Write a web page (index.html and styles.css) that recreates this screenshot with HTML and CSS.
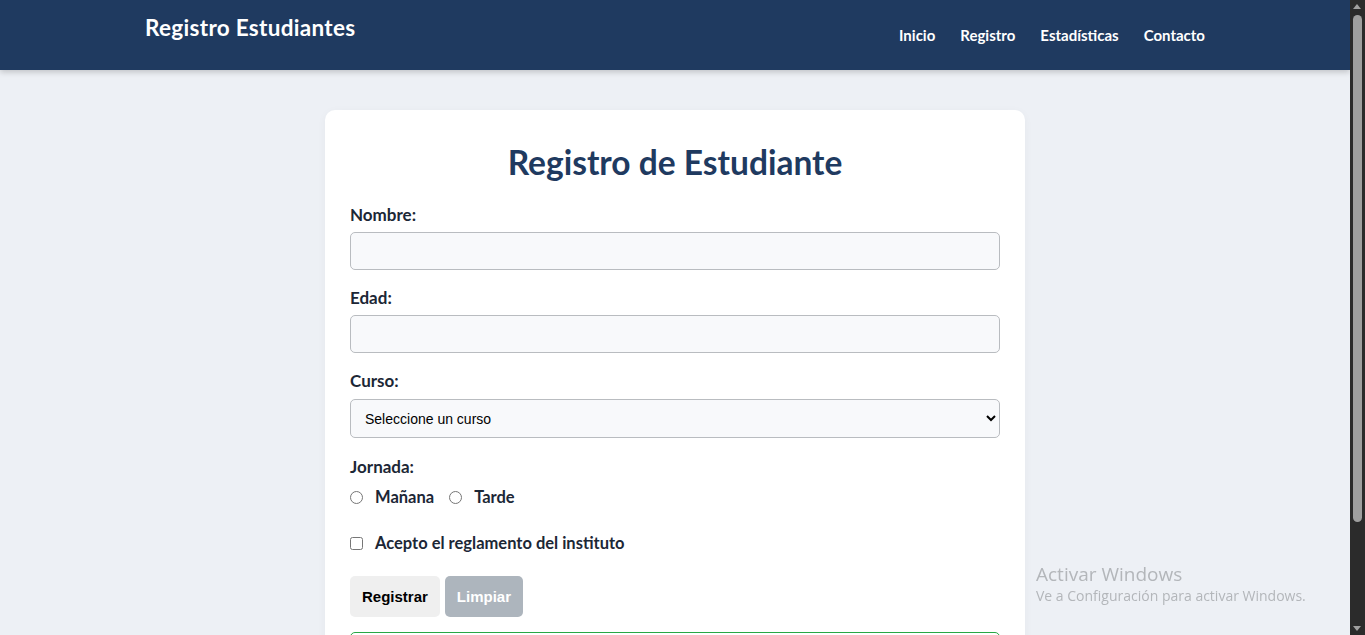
FILE: index.html
```html
<!DOCTYPE html>
<html lang="es">

<head>
    <meta charset="UTF-8">
    <meta name="viewport" content="width=device-width, initial-scale=1.0">
    <title>Registro Estudiantes</title>
    <link rel="stylesheet" href="styles.css">
</head>

<body>
    <header class="topbar">
        <div class="container topbar-inner">
            <h1 class="brand">Registro Estudiantes</h1>
            <nav class="menu">
                <a href="#">Inicio</a>
                <a href="#">Registro</a>
                <a href="#">Estadísticas</a>
                <a href="#">Contacto</a>
            </nav>
        </div>
    </header>

    <main class="main">
        <form class="card" name="f" onsubmit="return false">
            <h2 class="card-title">Registro de Estudiante</h2>

            <div class="form-group">
                <label for="txtNombre">Nombre:</label>
                <input type="text" id="txtNombre" class="field">
            </div>

            <div class="form-group">
                <label for="txtEdad">Edad:</label>
                <input type="number" id="txtEdad" class="field">
            </div>

            <div class="form-group group-select">
                <label for="selCurso">Curso:</label>
                <select id="selCurso" class="field select">
                    <option>Seleccione un curso</option>
                </select>
            </div>

            <div class="form-group">
                <label>Jornada:</label>
                <div class="options">
                    <label class="option"><input type="radio" name="jornada"> Mañana</label>
                    <label class="option"><input type="radio" name="jornada"> Tarde</label>
                </div>
            </div>

            <div class="form-group group-check">
                <label class="option check"><input type="checkbox"> Acepto el reglamento del instituto</label>
            </div>

            <div class="form-btn">
                <button type="submit" class="btn">Registrar</button>
                <button type="reset" class="btn btn-gray">Limpiar</button>
            </div>

            <!-- mensaje de resultado -->
            <div class="message" id="mensaje"></div>
        </form>
    </main>

    <div class="watermark">
        <p class="wm-title">Activar Windows</p>
        <p class="wm-sub">Ve a Configuración para activar Windows.</p>
    </div>

    <div class="scrollbar">
        <span class="arrow arrow-up"></span>
        <span class="thumb"></span>
        <span class="arrow arrow-down"></span>
    </div>
</body>

</html>
```

FILE: styles.css
```css
* {
    margin: 0;
    padding: 0;
    box-sizing: border-box;
}

html {
    overflow: hidden;
}

body {
    font-family: Lato, "Open Sans", sans-serif;
    background: #edf0f5;
    color: #1c2736;
    margin-right: 15px;
}

.container {
    max-width: 1100px;
    margin: 0 auto;
    padding: 0 20px;
}

.topbar {
    background: #1f3a60;
    height: 70px;
    box-shadow: 0 2px 6px rgba(0, 0, 0, 0.2);
}

.topbar-inner {
    display: flex;
    justify-content: space-between;
    align-items: flex-start;
}

.brand {
    color: #fff;
    font-size: 22.5px;
    font-weight: 700;
    line-height: 26px;
    margin-top: 15px;
    letter-spacing: 0.3px;
}

.menu {
    display: flex;
    gap: 25px;
    margin-top: 26px;
}

.menu a {
    color: #fff;
    text-decoration: none;
    font-size: 15px;
    font-weight: 700;
    line-height: 18px;
}

.main {
    padding: 40px 0 30px;
}

.card {
    width: 700px;
    margin: 0 auto;
    background: #fff;
    border-radius: 10px;
    padding: 25px 25px 30px;
    box-shadow: 0 2px 10px rgba(0, 0, 0, 0.04);
}

.card-title {
    text-align: center;
    color: #1f3a60;
    font-size: 33.5px;
    line-height: 38px;
    margin: 8px 0 24px;
}

.form-group {
    margin-bottom: 18px;
}

.form-group > label {
    display: block;
    font-size: 17px;
    font-weight: 700;
    line-height: 19px;
    margin-bottom: 8px;
}

.group-select {
    margin-bottom: 19px;
}

.group-select > label {
    margin-bottom: 9px;
}

.field {
    display: block;
    width: 100%;
    height: 38px;
    border: 1px solid #b9bcc0;
    border-radius: 5px;
    background: #f8f9fb;
    padding: 0 14px;
    font-family: "Liberation Sans", Arial, sans-serif;
    font-size: 14px;
    color: #000;
}

.select {
    height: 39px;
    padding: 0 10px;
}

.options {
    display: flex;
    gap: 15px;
    height: 26px;
    align-items: center;
}

.option {
    display: flex;
    align-items: center;
    gap: 12px;
    font-size: 16.5px;
    font-weight: 700;
    line-height: 26px;
}

.option input {
    width: 13px;
    height: 13px;
    margin: 0;
}

.group-check {
    padding-top: 2px;
    margin-bottom: 20px;
}

.form-group > .check {
    display: flex;
    font-size: 16.5px;
    line-height: 26px;
    margin: 0;
}

.form-btn {
    display: flex;
    gap: 5px;
}

.btn {
    height: 41px;
    padding: 0 12px;
    border: none;
    border-radius: 5px;
    background: #efefef;
    color: #000;
    font-family: "Liberation Sans", Arial, sans-serif;
    font-size: 15px;
    font-weight: 700;
    cursor: pointer;
}

.btn-gray {
    background: #adb5bd;
    color: #fff;
}

.message {
    margin-top: 15px;
    height: 56px;
    border: 1px solid #28a745;
    border-radius: 5px;
    background: #fff;
}

.watermark {
    position: fixed;
    left: 1036px;
    top: 562px;
    color: #b3b6ba;
    font-family: "Open Sans", sans-serif;
}

.wm-title {
    font-size: 19px;
    line-height: 24px;
}

.wm-sub {
    font-size: 14px;
    line-height: 20px;
}

.scrollbar {
    position: fixed;
    top: 0;
    right: 0;
    width: 15px;
    height: 100%;
    background: #2b2b2b;
}

.thumb {
    position: absolute;
    left: 3px;
    top: 15px;
    width: 9px;
    height: 507px;
    background: #9f9f9f;
    border-radius: 5px;
}

.arrow {
    position: absolute;
    left: 3px;
    width: 0;
    height: 0;
    border-left: 4.5px solid transparent;
    border-right: 4.5px solid transparent;
}

.arrow-up {
    top: 4px;
    border-bottom: 5px solid #a0a0a0;
}

.arrow-down {
    bottom: 4px;
    border-top: 5px solid #a0a0a0;
}
```
